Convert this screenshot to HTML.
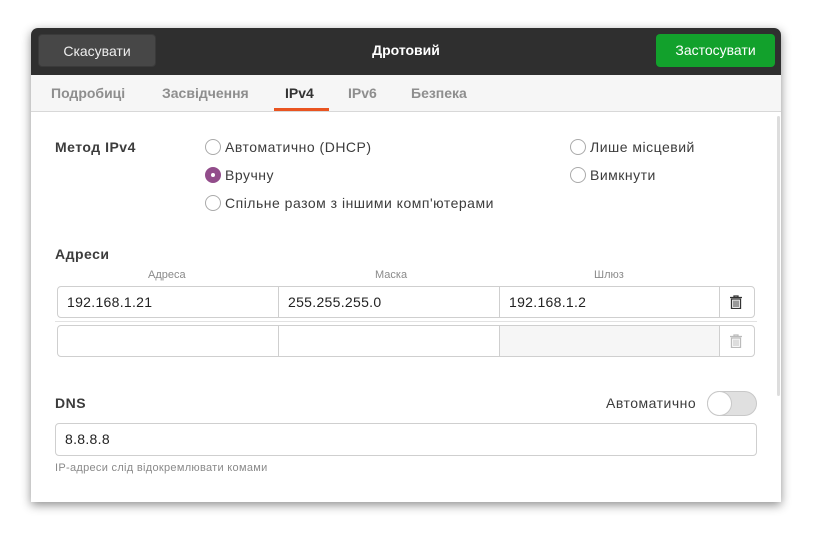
<!DOCTYPE html>
<html><head><meta charset="utf-8"><style>
body{margin:0;width:816px;height:541px;background:#fff;font-family:"Liberation Sans","DejaVu Sans",sans-serif;position:relative;overflow:hidden;color:#3c3c3c}
.win{position:absolute;left:31px;top:28px;width:750px;height:474px;background:#fff;box-shadow:0 3px 10px rgba(0,0,0,.45);border-radius:7px 7px 0 0;overflow:hidden}
.hdr{position:absolute;left:0;top:0;width:750px;height:47px;background:#2f2f2f}
.btn{position:absolute;top:6px;height:33px;border-radius:4px;color:#eee;font-size:14px;line-height:33px;text-align:center}
.tabs{position:absolute;top:47px;left:0;width:750px;height:36px;background:#f6f6f6;border-bottom:1px solid #d8d8d8}
.tab{position:absolute;top:10px;font-size:14px;font-weight:bold;color:#8e8e8e}
.a{position:absolute;font-size:14px;white-space:nowrap;letter-spacing:0.5px}
.r{position:absolute;width:14px;height:14px;border:1px solid #aaa;border-radius:50%;background:#fff}
.cell{position:absolute;height:32px;border:1px solid #cfcfcf;box-sizing:border-box;font-size:14px;line-height:31px;padding-left:9px;color:#222;background:#fff;letter-spacing:0.3px}
.lbl{position:absolute;top:241px;font-size:11px;color:#8a8a8a}
</style></head><body>
<div class="win">
<div class="hdr">
<div class="btn" style="left:7px;width:118px;background:#474747;border:1px solid #3a3a3a;box-sizing:border-box">Скасувати</div>
<div style="position:absolute;left:0;width:750px;top:14px;text-align:center;color:#fff;font-weight:bold;font-size:14px">Дротовий</div>
<div class="btn" style="left:625px;width:119px;background:#12a12c;color:#fff">Застосувати</div>
</div>
<div class="tabs">
<div class="tab" style="left:20px">Подробиці</div>
<div class="tab" style="left:131px">Засвідчення</div>
<div class="tab" style="left:254px;color:#333">IPv4</div>
<div style="position:absolute;left:243px;top:33px;width:55px;height:3px;background:#e95420"></div>
<div class="tab" style="left:317px">IPv6</div>
<div class="tab" style="left:380px">Безпека</div>
</div>
<div style="position:absolute;left:746px;top:88px;width:3px;height:280px;background:#ddd;border-radius:2px"></div>

<div class="a" style="left:24px;top:111px;font-weight:bold">Метод IPv4</div>
<div class="r" style="left:174px;top:111px"></div><div class="a" style="left:194px;top:111px">Автоматично (DHCP)</div>
<div class="r" style="left:174px;top:139px;background:#924d8b;border-color:#924d8b"><div style="position:absolute;left:5px;top:5px;width:4px;height:4px;background:#fff;border-radius:50%"></div></div><div class="a" style="left:194px;top:139px">Вручну</div>
<div class="r" style="left:174px;top:167px"></div><div class="a" style="left:194px;top:167px">Спільне разом з іншими комп'ютерами</div>
<div class="r" style="left:539px;top:111px"></div><div class="a" style="left:559px;top:111px">Лише місцевий</div>
<div class="r" style="left:539px;top:139px"></div><div class="a" style="left:559px;top:139px">Вимкнути</div>

<div class="a" style="left:24px;top:218px;font-weight:bold">Адреси</div>
<div class="lbl" style="left:117px">Адреса</div>
<div class="lbl" style="left:344px">Маска</div>
<div class="lbl" style="left:563px">Шлюз</div>
<div class="cell" style="left:26px;top:258px;width:222px;border-radius:4px 0 0 4px">192.168.1.21</div>
<div class="cell" style="left:247px;top:258px;width:222px">255.255.255.0</div>
<div class="cell" style="left:468px;top:258px;width:221px">192.168.1.2</div>
<div class="cell" style="left:688px;top:258px;width:36px;border-radius:0 4px 4px 0"></div>
<div style="position:absolute;left:24px;top:293px;width:702px;height:1px;background:#e2e2e2"></div>
<div class="cell" style="left:26px;top:297px;width:222px;border-radius:4px 0 0 4px"></div>
<div class="cell" style="left:247px;top:297px;width:222px"></div>
<div class="cell" style="left:468px;top:297px;width:221px;background:#f6f6f6"></div>
<div class="cell" style="left:688px;top:297px;width:36px;border-radius:0 4px 4px 0"></div>
<svg style="position:absolute;left:699px;top:267px" width="12" height="14" viewBox="0 0 12 14"><path d="M0 2.5h12M4 2.5V1h4v1.5" stroke="#333" stroke-width="1.3" fill="none"/><path d="M1.5 4h9v9.5h-9z" fill="none" stroke="#333" stroke-width="1.3"/><path d="M4 5.5v6.5M6 5.5v6.5M8 5.5v6.5" stroke="#333" stroke-width="1"/></svg>
<svg style="position:absolute;left:699px;top:306px" width="12" height="14" viewBox="0 0 12 14"><path d="M0 2.5h12M4 2.5V1h4v1.5" stroke="#bbb" stroke-width="1.3" fill="none"/><path d="M1.5 4h9v9.5h-9z" fill="none" stroke="#bbb" stroke-width="1.3"/><path d="M4 5.5v6.5M6 5.5v6.5M8 5.5v6.5" stroke="#bbb" stroke-width="1"/></svg>

<div class="a" style="left:24px;top:367px;font-weight:bold">DNS</div>
<div class="a" style="left:575px;top:367px">Автоматично</div>
<div style="position:absolute;left:676px;top:363px;width:50px;height:25px;border-radius:13px;background:#e0e0e0;border:1px solid #c8c8c8;box-sizing:border-box"><div style="position:absolute;left:-1px;top:-1px;width:25px;height:25px;border-radius:50%;background:#fff;border:1px solid #c8c8c8;box-sizing:border-box"></div></div>
<div class="cell" style="left:24px;top:395px;width:702px;height:33px;border-radius:4px;padding-left:9px">8.8.8.8</div>
<div class="a" style="left:24px;top:434px;font-size:11px;color:#8a8a8a;letter-spacing:0.3px">IP-адреси слід відокремлювати комами</div>
</div>
</body></html>
